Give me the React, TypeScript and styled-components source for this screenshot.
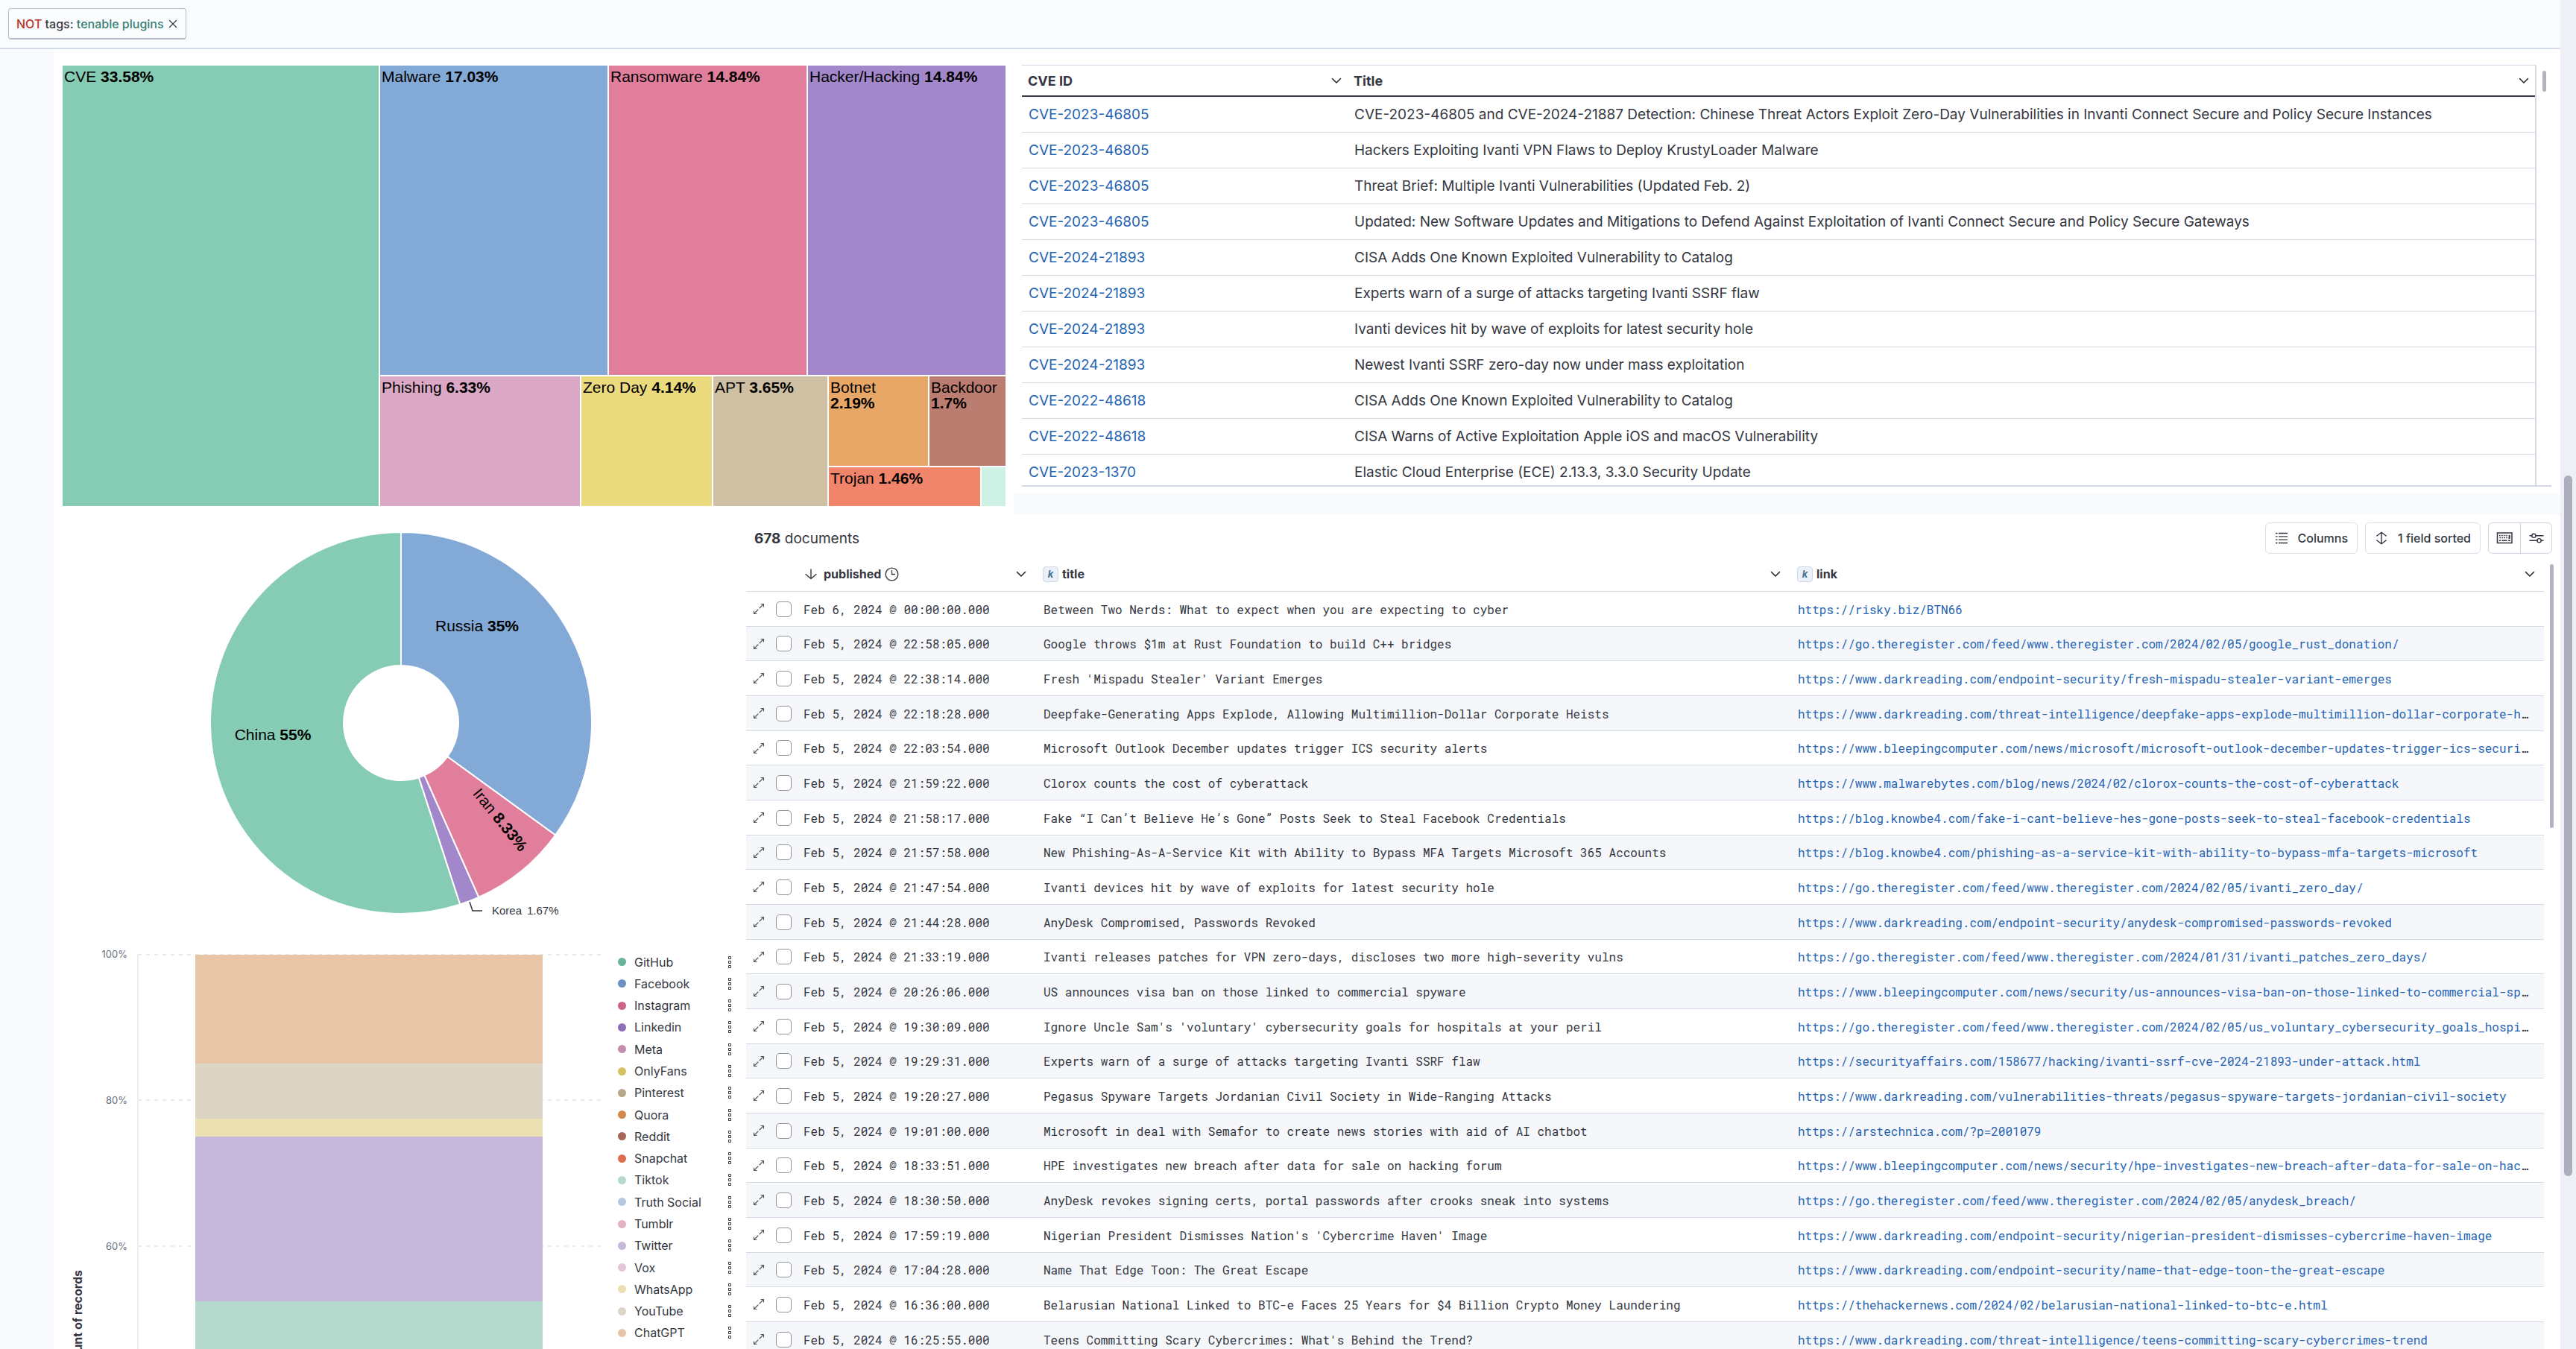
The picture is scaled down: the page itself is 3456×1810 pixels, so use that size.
import React from "react";
import styled, { createGlobalStyle } from "styled-components";

const sans = `Inter, "Liberation Sans", sans-serif`;
const chartFont = `"Liberation Sans", Arial, sans-serif`;
const mono = `"Roboto Mono", "DejaVu Sans Mono", monospace`;

const GlobalStyle = createGlobalStyle`
  *, *::before, *::after { box-sizing: border-box; }
  body { margin: 0; background: #f8fafe; color: #343741; font-family: ${sans}; }
  button { font: inherit; color: inherit; }
  a { color: #2463b3; text-decoration: none; }
`;

const Shell = styled.div`
  display: grid;
  grid-template-columns: minmax(0, 1fr) 21px;
  height: 100vh;
  overflow: hidden;
`;

const Main = styled.main`
  min-width: 0;
  overflow: hidden;
`;

const ScrollTrack = styled.div`
  background: #eff0f6;
  display: grid;
  grid-template-rows: 638fr 940fr 232fr;
  justify-items: center;
`;

const ScrollThumb = styled.div<{ $width: number }>`
  grid-row: 2;
  width: ${(p) => p.$width}px;
  border-radius: 6px;
  background: #acafbb;
`;

const FilterBar = styled.header`
  height: 66px;
  padding: 11px;
  background: #fafbfd;
  border-bottom: 2px solid #d3dae6;
`;

const FilterPill = styled.div`
  display: inline-flex;
  align-items: center;
  gap: 5px;
  height: 42px;
  padding: 0 10px;
  background: #fbfcfe;
  border: 1px solid #b4bbc9;
  border-bottom-width: 2px;
  border-radius: 4px;
  font-size: 16px;
  font-weight: 500;
  white-space: pre;
`;

const Negate = styled.span`
  color: #b8352b;
`;

const FilterValue = styled.span`
  color: #387f74;
`;

const IconButton = styled.button`
  display: inline-flex;
  align-items: center;
  justify-content: center;
  padding: 0;
  border: 0;
  background: none;
`;

const Board = styled.div`
  padding-left: 72px;
`;

const TopRow = styled.div`
  display: grid;
  grid-template-columns: minmax(0, 1288fr) minmax(0, 2075fr);
  align-items: start;
`;

const BottomRow = styled.div`
  display: grid;
  grid-template-columns: minmax(0, 929fr) minmax(0, 2434fr);
  align-items: start;
  background: #fff;
`;

const TreemapPanel = styled.section`
  padding: 22px 11px 12px 12px;
  background: #fff;
`;

const fractions = (sizes: number[]) => sizes.map((n) => `minmax(0, ${n}fr)`).join(" ");

const AcrossTiles = styled.div<{ $sizes: number[]; $height?: number }>`
  display: grid;
  grid-template-columns: ${(p) => fractions(p.$sizes)};
  gap: 2px;
  height: ${(p) => (p.$height ? `${p.$height}px` : "auto")};
`;

const DownTiles = styled.div<{ $sizes: number[] }>`
  display: grid;
  grid-template-rows: ${(p) => fractions(p.$sizes)};
  gap: 2px;
`;

const Tile = styled.div<{ $color: string }>`
  padding: 4px 8px 0 2px;
  overflow: hidden;
  background: ${(p) => p.$color};
  color: #000;
  font: 21px/21px ${chartFont};
`;

const CvePanel = styled.section`
  padding: 21px 12px 10px 11px;
  background: #fff;
`;

const CveFrame = styled.div`
  display: grid;
  grid-template-columns: minmax(0, 1fr) 20px;
  height: 566px;
  overflow: hidden;
  border-bottom: 2px solid #d3dae6;
`;

const CveScroll = styled.div`
  overflow: hidden;
  border-right: 2px solid #d3dae6;
`;

const CveGutter = styled.div`
  padding: 8px 0 0 8px;
`;

const MiniThumb = styled.div<{ $height: number }>`
  width: 5px;
  height: ${(p) => p.$height}px;
  border-radius: 3px;
  background: #b1b4c0;
`;

const Table = styled.table`
  width: 100%;
  table-layout: fixed;
  border-collapse: separate;
  border-spacing: 0;
`;

const Col = styled.col<{ $width?: number }>`
  width: ${(p) => (p.$width ? `${p.$width}px` : "auto")};
`;

const CveHead = styled.th`
  height: 43px;
  padding: 0 7px 0 8px;
  border-top: 1px solid #d3dae6;
  border-bottom: 2px solid #343741;
  font-size: 18px;
  font-weight: 700;
  text-align: left;
`;

const CveCell = styled.td`
  height: 48px;
  padding: 0 9px;
  border-bottom: 1px solid #d3dae6;
  font-size: 19px;
  white-space: nowrap;
`;

const HeadContent = styled.div<{ $gap?: number }>`
  display: flex;
  align-items: center;
  gap: ${(p) => p.$gap ?? 5}px;
`;

const Push = styled(IconButton)`
  margin-left: auto;
`;

const DocsPanel = styled.section`
  padding-top: 10px;
`;

const Toolbar = styled.div`
  display: flex;
  align-items: center;
  gap: 10px;
  height: 46px;
  padding: 0 11px 4px;
`;

const DocCount = styled.div`
  margin-right: auto;
  font-size: 19px;
`;

const ToolButton = styled.button`
  display: flex;
  align-items: center;
  gap: 13px;
  height: 42px;
  padding: 0 12px;
  border: 1px solid #d9dfea;
  border-radius: 6px;
  background: #fff;
  font-size: 16px;
  font-weight: 500;
`;

const ToolGroup = styled.div`
  display: flex;
  height: 42px;
  border: 1px solid #ccd4e2;
  border-radius: 6px;
`;

const GroupButton = styled(IconButton)`
  width: 42px;
  & + & {
    border-left: 1px solid #d3dae6;
  }
`;

const DocsFrame = styled.div`
  display: grid;
  grid-template-columns: minmax(0, 1fr) 22px;
`;

const DocsGutter = styled.div`
  padding: 10px 0 0 8px;
`;

const DocHead = styled.th`
  height: 47px;
  padding: 0 11px 0 10px;
  border-bottom: 1px solid #d3dae6;
  font-size: 16px;
  font-weight: 700;
  text-align: left;
`;

const FieldToken = styled.span`
  display: inline-flex;
  align-items: center;
  justify-content: center;
  width: 21px;
  height: 21px;
  border: 1px solid #cbd8e8;
  border-radius: 4px;
  background: #ecf1f9;
  color: #4a7194;
  font: italic 700 13px ${sans};
`;

const DocRow = styled.tr`
  height: 47px;
  &:nth-child(3n + 2) {
    height: 46px;
  }
  &:nth-child(even) {
    background: #f5f7fb;
  }
`;

const DocCell = styled.td`
  padding: 1px 13px 0 11px;
  border-bottom: 1px solid #d3dae6;
  overflow: hidden;
  font: 16px/24px ${mono};
  text-overflow: ellipsis;
  white-space: nowrap;
`;

const ControlCell = styled.td`
  padding: 0 5px;
  border-bottom: 1px solid #d3dae6;
  line-height: 0;
  text-align: center;
`;

const Checkbox = styled.input`
  appearance: none;
  width: 21px;
  height: 21px;
  margin: 0;
  border: 1px solid #8f939b;
  border-radius: 5px;
  background: #fff;
`;

const ChartSvg = styled.svg`
  display: block;
  width: 100%;
`;

const BarSection = styled.section`
  display: grid;
  grid-template-columns: minmax(0, 1fr) 172px;
  align-items: start;
`;

const Legend = styled.ul`
  display: flex;
  flex-direction: column;
  height: 527px;
  margin: 16px 0 0;
  padding: 0 14px 0 0;
  list-style: none;
`;

const LegendItem = styled.li`
  display: flex;
  flex: 1;
  align-items: center;
  gap: 11px;
  font-size: 16px;
`;

const Dot = styled.span<{ $color: string }>`
  width: 11px;
  height: 11px;
  border-radius: 50%;
  background: ${(p) => p.$color};
`;

const Chevron = () => (
  <svg width="16" height="16" viewBox="0 0 16 16" fill="none" stroke="#1f222b" strokeWidth="1.5" strokeLinecap="round" strokeLinejoin="round" aria-hidden="true">
    <path d="M2.500 5.500 8 11l5.500-5.500" />
  </svg>
);

const Cross = () => (
  <svg width="14" height="14" viewBox="0 0 14 14" stroke="#343741" strokeWidth="1.2" strokeLinecap="round" aria-hidden="true">
    <path d="m2.500 2.500 9 9m0-9-9 9" />
  </svg>
);

const SortDown = () => (
  <svg width="20" height="20" viewBox="0 0 20 20" fill="none" stroke="#343741" strokeWidth="1.4" strokeLinecap="round" strokeLinejoin="round" aria-hidden="true">
    <path d="M11 4v12M4 10.500l7 6 7-6" />
  </svg>
);

const Clock = () => (
  <svg width="19" height="19" viewBox="0 0 20 20" fill="none" stroke="#343741" strokeWidth="1.4" strokeLinecap="round" aria-hidden="true">
    <circle cx="10" cy="10" r="8.800" />
    <path d="M10 4.800V10h4.200" />
  </svg>
);

const Expand = () => (
  <svg width="16" height="16" viewBox="0 0 16 16" fill="none" stroke="#50535c" strokeWidth="1.1" strokeLinecap="round" strokeLinejoin="round" aria-hidden="true">
    <path d="M11 1.500h3.500V5M5 14.500H1.500V11M13.500 2.500 9 7M7 9l-4.500 4.500" />
  </svg>
);

const ListIcon = () => (
  <svg width="18" height="18" viewBox="0 0 18 18" fill="none" stroke="#343741" strokeWidth="1.3" aria-hidden="true">
    <path d="M1 2.500h2.500M1 6.800h2.500M1 11.200h2.500M1 15.500h2.500M5 2.500h12M5 6.800h12M5 11.200h12M5 15.500h12" />
  </svg>
);

const Sortable = () => (
  <svg width="18" height="18" viewBox="0 0 18 18" fill="none" stroke="#343741" strokeWidth="1.4" strokeLinecap="round" strokeLinejoin="round" aria-hidden="true">
    <path d="M9 1.500v15M2.800 6 9 1.200 15.200 6M2.800 12 9 16.800 15.200 12" />
  </svg>
);

const Keyboard = () => (
  <svg width="22" height="18" viewBox="0 0 22 18" fill="none" stroke="#343741" strokeWidth="1.500" aria-hidden="true">
    <rect x="1.500" y="2" width="19.500" height="13.500" />
    <path d="M4 5.500h12M4.500 8.500h12" strokeDasharray="1.700 1.200" />
    <path d="M4 12.300h2M7.500 12.300h7M16 12.300h3" />
    <path d="M17.700 4.800v5" strokeWidth="2" />
  </svg>
);

const Controls = () => (
  <svg width="20" height="20" viewBox="0 0 20 20" fill="none" stroke="#343741" strokeWidth="1.4" strokeLinecap="round" aria-hidden="true">
    <path d="M1 6.800h2.800M9 6.800h10M1 13.200h10M16.200 13.200H19" />
    <circle cx="6.400" cy="6.800" r="2.600" />
    <circle cx="13.600" cy="13.200" r="2.600" />
  </svg>
);

const Dots = () => (
  <svg width="16" height="16" viewBox="0 0 16 16" fill="none" stroke="#343741" aria-hidden="true">
    <path d="M6.500.500h3v3h-3zM6.500 6.500h3v3h-3zM6.500 12.500h3v3h-3z" />
  </svg>
);

const cves: [string, string][] = [
  ["CVE-2023-46805", "CVE-2023-46805 and CVE-2024-21887 Detection: Chinese Threat Actors Exploit Zero-Day Vulnerabilities in Invanti Connect Secure and Policy Secure Instances"],
  ["CVE-2023-46805", "Hackers Exploiting Ivanti VPN Flaws to Deploy KrustyLoader Malware"],
  ["CVE-2023-46805", "Threat Brief: Multiple Ivanti Vulnerabilities (Updated Feb. 2)"],
  ["CVE-2023-46805", "Updated: New Software Updates and Mitigations to Defend Against Exploitation of Ivanti Connect Secure and Policy Secure Gateways"],
  ["CVE-2024-21893", "CISA Adds One Known Exploited Vulnerability to Catalog"],
  ["CVE-2024-21893", "Experts warn of a surge of attacks targeting Ivanti SSRF flaw"],
  ["CVE-2024-21893", "Ivanti devices hit by wave of exploits for latest security hole"],
  ["CVE-2024-21893", "Newest Ivanti SSRF zero-day now under mass exploitation"],
  ["CVE-2022-48618", "CISA Adds One Known Exploited Vulnerability to Catalog"],
  ["CVE-2022-48618", "CISA Warns of Active Exploitation Apple iOS and macOS Vulnerability"],
  ["CVE-2023-1370", "Elastic Cloud Enterprise (ECE) 2.13.3, 3.3.0 Security Update"],
];

const register = "https://go.theregister.com/feed/www.theregister.com/2024/";
const dark = "https://www.darkreading.com/";
const bleeping = "https://www.bleepingcomputer.com/news/";

const docs: [string, string, string][] = [
  ["Feb 6, 2024 @ 00:00:00.000", "Between Two Nerds: What to expect when you are expecting to cyber", "https://risky.biz/BTN66"],
  ["Feb 5, 2024 @ 22:58:05.000", "Google throws $1m at Rust Foundation to build C++ bridges", register + "02/05/google_rust_donation/"],
  ["Feb 5, 2024 @ 22:38:14.000", "Fresh 'Mispadu Stealer' Variant Emerges", dark + "endpoint-security/fresh-mispadu-stealer-variant-emerges"],
  ["Feb 5, 2024 @ 22:18:28.000", "Deepfake-Generating Apps Explode, Allowing Multimillion-Dollar Corporate Heists", dark + "threat-intelligence/deepfake-apps-explode-multimillion-dollar-corporate-heists"],
  ["Feb 5, 2024 @ 22:03:54.000", "Microsoft Outlook December updates trigger ICS security alerts", bleeping + "microsoft/microsoft-outlook-december-updates-trigger-ics-security-alerts/"],
  ["Feb 5, 2024 @ 21:59:22.000", "Clorox counts the cost of cyberattack", "https://www.malwarebytes.com/blog/news/2024/02/clorox-counts-the-cost-of-cyberattack"],
  ["Feb 5, 2024 @ 21:58:17.000", "Fake “I Can’t Believe He’s Gone” Posts Seek to Steal Facebook Credentials", "https://blog.knowbe4.com/fake-i-cant-believe-hes-gone-posts-seek-to-steal-facebook-credentials"],
  ["Feb 5, 2024 @ 21:57:58.000", "New Phishing-As-A-Service Kit with Ability to Bypass MFA Targets Microsoft 365 Accounts", "https://blog.knowbe4.com/phishing-as-a-service-kit-with-ability-to-bypass-mfa-targets-microsoft"],
  ["Feb 5, 2024 @ 21:47:54.000", "Ivanti devices hit by wave of exploits for latest security hole", register + "02/05/ivanti_zero_day/"],
  ["Feb 5, 2024 @ 21:44:28.000", "AnyDesk Compromised, Passwords Revoked", dark + "endpoint-security/anydesk-compromised-passwords-revoked"],
  ["Feb 5, 2024 @ 21:33:19.000", "Ivanti releases patches for VPN zero-days, discloses two more high-severity vulns", register + "01/31/ivanti_patches_zero_days/"],
  ["Feb 5, 2024 @ 20:26:06.000", "US announces visa ban on those linked to commercial spyware", bleeping + "security/us-announces-visa-ban-on-those-linked-to-commercial-spyware/"],
  ["Feb 5, 2024 @ 19:30:09.000", "Ignore Uncle Sam's 'voluntary' cybersecurity goals for hospitals at your peril", register + "02/05/us_voluntary_cybersecurity_goals_hospitals/"],
  ["Feb 5, 2024 @ 19:29:31.000", "Experts warn of a surge of attacks targeting Ivanti SSRF flaw", "https://securityaffairs.com/158677/hacking/ivanti-ssrf-cve-2024-21893-under-attack.html"],
  ["Feb 5, 2024 @ 19:20:27.000", "Pegasus Spyware Targets Jordanian Civil Society in Wide-Ranging Attacks", dark + "vulnerabilities-threats/pegasus-spyware-targets-jordanian-civil-society"],
  ["Feb 5, 2024 @ 19:01:00.000", "Microsoft in deal with Semafor to create news stories with aid of AI chatbot", "https://arstechnica.com/?p=2001079"],
  ["Feb 5, 2024 @ 18:33:51.000", "HPE investigates new breach after data for sale on hacking forum", bleeping + "security/hpe-investigates-new-breach-after-data-for-sale-on-hacking-forum/"],
  ["Feb 5, 2024 @ 18:30:50.000", "AnyDesk revokes signing certs, portal passwords after crooks sneak into systems", register + "02/05/anydesk_breach/"],
  ["Feb 5, 2024 @ 17:59:19.000", "Nigerian President Dismisses Nation's 'Cybercrime Haven' Image", dark + "endpoint-security/nigerian-president-dismisses-cybercrime-haven-image"],
  ["Feb 5, 2024 @ 17:04:28.000", "Name That Edge Toon: The Great Escape", dark + "endpoint-security/name-that-edge-toon-the-great-escape"],
  ["Feb 5, 2024 @ 16:36:00.000", "Belarusian National Linked to BTC-e Faces 25 Years for $4 Billion Crypto Money Laundering", "https://thehackernews.com/2024/02/belarusian-national-linked-to-btc-e.html"],
  ["Feb 5, 2024 @ 16:25:55.000", "Teens Committing Scary Cybercrimes: What's Behind the Trend?", dark + "threat-intelligence/teens-committing-scary-cybercrimes-trend"],
];

const legend: [string, string][] = [
  ["GitHub", "#6bb39a"],
  ["Facebook", "#6b91c4"],
  ["Instagram", "#cb6485"],
  ["Linkedin", "#8d6fb5"],
  ["Meta", "#c58dad"],
  ["OnlyFans", "#d5c162"],
  ["Pinterest", "#b9a888"],
  ["Quora", "#d3894c"],
  ["Reddit", "#a56655"],
  ["Snapchat", "#de6c4f"],
  ["Tiktok", "#b5d9cc"],
  ["Truth Social", "#b5c8e1"],
  ["Tumblr", "#e4b1c1"],
  ["Twitter", "#c5b8da"],
  ["Vox", "#e2c6d6"],
  ["WhatsApp", "#eae0b1"],
  ["YouTube", "#dcd4c5"],
  ["ChatGPT", "#e7c5a6"],
];

const slices = [
  { name: "Russia", share: 35, color: "#83a9d6" },
  { name: "Iran", share: 8.33, color: "#e07e9c" },
  { name: "Korea", share: 1.67, color: "#a387cb" },
  { name: "China", share: 55, color: "#86ccb4" },
];

const cx = 466;
const cy = 279;

const point = (radius: number, share: number) => {
  const angle = (share / 100) * Math.PI * 2;
  return `${cx + radius * Math.sin(angle)} ${cy - radius * Math.cos(angle)}`;
};

const slicePath = (from: number, to: number) => {
  const large = to - from > 50 ? 1 : 0;
  return `M${point(256, from)}A256 256 0 ${large} 1 ${point(256, to)}L${point(77, to)}A77 77 0 ${large} 0 ${point(77, from)}Z`;
};

function Donut() {
  let start = 0;
  return (
    <ChartSvg viewBox="0 0 929 569" role="img" aria-label="Documents by country">
      {slices.map((s) => {
        const from = start;
        start += s.share;
        return <path key={s.name} d={slicePath(from, start)} fill={s.color} stroke="#fff" strokeWidth="2" />;
      })}
      <g fontFamily={chartFont} fontSize="21" fill="#000" textAnchor="middle">
        <text x="568" y="156">Russia <tspan fontWeight="700">35%</tspan></text>
        <text x="294" y="302">China <tspan fontWeight="700">55%</tspan></text>
        <text x="599" y="409" dy="7" transform="rotate(51 599 409)">Iran <tspan fontWeight="700">8.33%</tspan></text>
      </g>
      <path d="M558 519l4 12h13" fill="none" stroke="#343741" strokeWidth="1.5" />
      <g fontFamily={chartFont} fontSize="15" fill="#343741">
        <text x="588" y="536">Korea</text>
        <text x="635" y="536">1.67%</text>
      </g>
    </ChartSvg>
  );
}

function StackedBar() {
  return (
    <ChartSvg viewBox="0 0 757 700" role="img" aria-label="Count of records by platform">
      <g stroke="#e9ebf0" strokeWidth="2">
        <path d="M113 21v679" stroke="#eceef3" />
        <path d="M113 21h621M113 216h621M113 412h621M113 608h621" strokeDasharray="5 6" />
      </g>
      <rect x="190" y="21" width="466" height="146" fill="#e7c5a6" />
      <rect x="190" y="167" width="466" height="74" fill="#dcd4c5" />
      <rect x="190" y="241" width="466" height="24" fill="#eae0b1" />
      <rect x="190" y="265" width="466" height="221" fill="#c5b8da" />
      <rect x="190" y="486" width="466" height="214" fill="#b5d9cc" />
      <g fontFamily={sans} fontSize="13" fill="#69707d" textAnchor="end">
        <text x="99" y="25">100%</text>
        <text x="99" y="221">80%</text>
        <text x="99" y="417">60%</text>
      </g>
      <text transform="translate(38 444) rotate(-90)" textAnchor="end" fontFamily={sans} fontSize="16" fontWeight="700" fill="#343741">Count of records</text>
    </ChartSvg>
  );
}

const Label = ({ name, value }: { name: string; value: string }) => (
  <>
    {name} <strong>{value}</strong>
  </>
);

export default function App() {
  return (
    <>
      <GlobalStyle />
      <Shell>
        <Main>
          <FilterBar>
            <FilterPill>
              <span><Negate>NOT </Negate>tags: <FilterValue>tenable plugins</FilterValue></span>
              <IconButton aria-label="Remove filter"><Cross /></IconButton>
            </FilterPill>
          </FilterBar>
          <Board>
            <TopRow>
              <TreemapPanel>
                <AcrossTiles $sizes={[424, 839]} $height={591}>
                  <Tile $color="#86ccb4"><Label name="CVE" value="33.58%" /></Tile>
                  <DownTiles $sizes={[415, 174]}>
                    <AcrossTiles $sizes={[305, 265, 265]}>
                      <Tile $color="#83a9d6"><Label name="Malware" value="17.03%" /></Tile>
                      <Tile $color="#e07e9c"><Label name="Ransomware" value="14.84%" /></Tile>
                      <Tile $color="#a387cb"><Label name="Hacker/Hacking" value="14.84%" /></Tile>
                    </AcrossTiles>
                    <AcrossTiles $sizes={[268, 175, 153, 237]}>
                      <Tile $color="#dba8c6"><Label name="Phishing" value="6.33%" /></Tile>
                      <Tile $color="#ecda7e"><Label name="Zero Day" value="4.14%" /></Tile>
                      <Tile $color="#cfc0a3"><Label name="APT" value="3.65%" /></Tile>
                      <DownTiles $sizes={[120, 52]}>
                        <AcrossTiles $sizes={[133, 102]}>
                          <Tile $color="#e9a767"><Label name="Botnet" value="2.19%" /></Tile>
                          <Tile $color="#bb7d6f"><Label name="Backdoor" value="1.7%" /></Tile>
                        </AcrossTiles>
                        <AcrossTiles $sizes={[203, 32]}>
                          <Tile $color="#f0856b"><Label name="Trojan" value="1.46%" /></Tile>
                          <Tile $color="#cdf1e4" />
                        </AcrossTiles>
                      </DownTiles>
                    </AcrossTiles>
                  </DownTiles>
                </AcrossTiles>
              </TreemapPanel>
              <CvePanel>
                <CveFrame>
                  <CveScroll>
                    <Table>
                      <colgroup><Col $width={437} /><Col /></colgroup>
                      <thead>
                        <tr>
                          <CveHead><HeadContent>CVE ID<Push aria-label="CVE ID options"><Chevron /></Push></HeadContent></CveHead>
                          <CveHead><HeadContent>Title<Push aria-label="Title options"><Chevron /></Push></HeadContent></CveHead>
                        </tr>
                      </thead>
                      <tbody>
                        {cves.map(([id, title]) => (
                          <tr key={id + title}>
                            <CveCell><a href="#cve">{id}</a></CveCell>
                            <CveCell>{title}</CveCell>
                          </tr>
                        ))}
                      </tbody>
                    </Table>
                  </CveScroll>
                  <CveGutter><MiniThumb $height={28} /></CveGutter>
                </CveFrame>
              </CvePanel>
            </TopRow>
            <BottomRow>
              <div>
                <Donut />
                <BarSection>
                  <StackedBar />
                  <Legend>
                    {legend.map(([name, color]) => (
                      <LegendItem key={name}>
                        <Dot $color={color} />
                        {name}
                        <Push aria-label={`${name} actions`}><Dots /></Push>
                      </LegendItem>
                    ))}
                  </Legend>
                </BarSection>
              </div>
              <DocsPanel>
                <Toolbar>
                  <DocCount><strong>678</strong> documents</DocCount>
                  <ToolButton><ListIcon />Columns</ToolButton>
                  <ToolButton><Sortable />1 field sorted</ToolButton>
                  <ToolGroup>
                    <GroupButton aria-label="Keyboard shortcuts"><Keyboard /></GroupButton>
                    <GroupButton aria-label="Display options"><Controls /></GroupButton>
                  </ToolGroup>
                </Toolbar>
                <DocsFrame>
                  <Table>
                    <colgroup><Col $width={34} /><Col $width={32} /><Col $width={322} /><Col $width={1012} /><Col /></colgroup>
                    <thead>
                      <tr>
                        <DocHead aria-label="Expand" />
                        <DocHead aria-label="Select" />
                        <DocHead><HeadContent $gap={8}><SortDown /><HeadContent $gap={5}>published<Clock /></HeadContent><Push aria-label="published options"><Chevron /></Push></HeadContent></DocHead>
                        <DocHead><HeadContent><FieldToken>k</FieldToken>title<Push aria-label="title options"><Chevron /></Push></HeadContent></DocHead>
                        <DocHead><HeadContent><FieldToken>k</FieldToken>link<Push aria-label="link options"><Chevron /></Push></HeadContent></DocHead>
                      </tr>
                    </thead>
                    <tbody>
                      {docs.map(([published, title, link]) => (
                        <DocRow key={published}>
                          <ControlCell><IconButton aria-label="Expand document"><Expand /></IconButton></ControlCell>
                          <ControlCell><Checkbox type="checkbox" aria-label={`Select ${title}`} /></ControlCell>
                          <DocCell>{published}</DocCell>
                          <DocCell>{title}</DocCell>
                          <DocCell><a href={link}>{link}</a></DocCell>
                        </DocRow>
                      ))}
                    </tbody>
                  </Table>
                  <DocsGutter><MiniThumb $height={354} /></DocsGutter>
                </DocsFrame>
              </DocsPanel>
            </BottomRow>
          </Board>
        </Main>
        <ScrollTrack><ScrollThumb $width={11} /></ScrollTrack>
      </Shell>
    </>
  );
}
